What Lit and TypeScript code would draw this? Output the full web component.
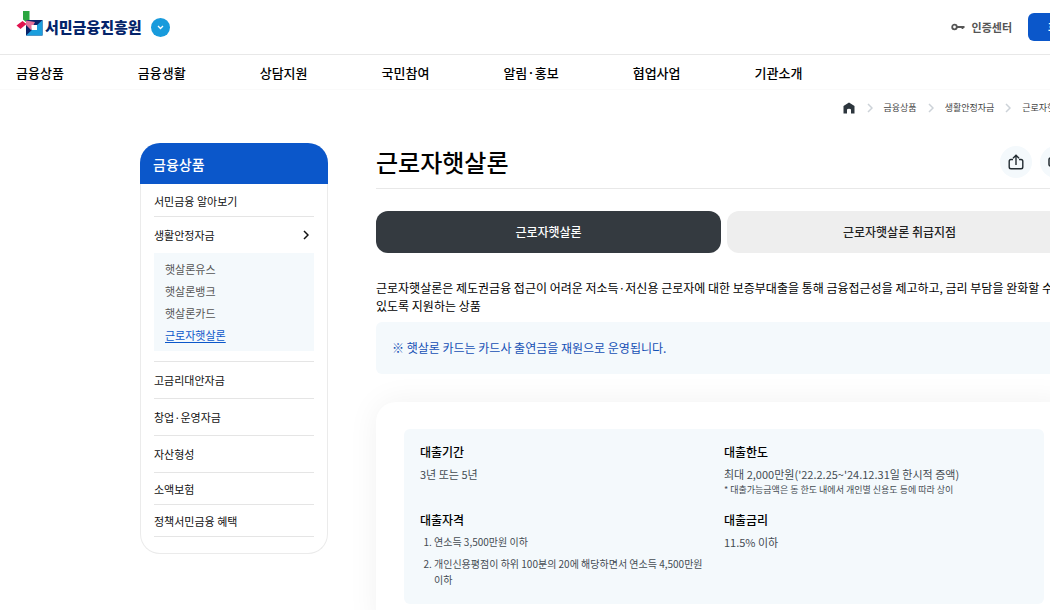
import { LitElement, html, svg, css, nothing } from "lit";
import { customElement, state } from "lit/decorators.js";
import { classMap } from "lit/directives/class-map.js";

const chevron = svg`<path d="M1 1l4 4-4 4" fill="none" stroke="currentColor" stroke-width="1.500"/>`;

@customElement("site-header")
class SiteHeader extends LitElement {
  static styles = css`
    :host { display: block; }
    .bar {
      display: flex; align-items: center; justify-content: space-between;
      height: 54px; padding: 0 16px; border-bottom: 1px solid #e8e8e8;
    }
    .brand, .tools, .auth { display: flex; align-items: center; }
    a { color: inherit; text-decoration: none; }
    .brand { gap: 9px; }
    .logo { display: flex; align-items: center; gap: 2px; color: #04246a; font-size: 15px; line-height: 22px; font-weight: 900; }
    .logo svg { display: block; margin-bottom: 8px; }
    button { font: inherit; border: 0; cursor: pointer; }
    .more { display: grid; place-items: center; width: 19px; height: 19px; padding: 0; border-radius: 50%; background: #189bdc; color: #fff; }
    .tools { gap: 16px; }
    .auth { gap: 7px; font-size: 11px; font-weight: 700; color: #555; }
    .dormant { min-width: 168px; height: 28px; padding: 0 20px; border-radius: 6px; background: #0b57ca; color: #fff; font-size: 11px; font-weight: 700; text-align: left; }
    .nav { display: flex; gap: 74px; align-items: center; height: 34px; padding: 0 16px; margin: 0; list-style: none; border-bottom: 1px solid #fafafa; font-size: 13px; font-weight: 500; }
  `;
  menu = ["금융상품", "금융생활", "상담지원", "국민참여", "알림·홍보", "협업사업", "기관소개"];
  render() {
    return html`
      <header>
        <div class="bar">
          <div class="brand">
            <a class="logo" href="#">
              <svg width="27" height="27" viewBox="0 0 27 27" aria-hidden="true">
                <path d="M7 1h6.500v9.500l-3 2-3.500-3z" fill="#2ba640"/>
                <path d="M.5 15.500 6.500 11l4 3-6 5z" fill="#e0134f"/>
                <path d="M10 10h16.500v15.500H10z" fill="#0a2369"/>
                <path d="M26.500 10v15.500H10z" fill="#1b9edd"/>
                <path d="M10 10.500 19 12l-4 8-5-5z" fill="#e2719a"/>
                <path d="M15.500 15h5.500v5h-5.500z" fill="#fff"/>
              </svg>
              <span>서민금융진흥원</span>
            </a>
            <button class="more" aria-label="관련 사이트">
              <svg width="7" height="5" viewBox="0 0 7 5"><path d="M1 1l2.500 2.500L6 1" fill="none" stroke="#fff" stroke-width="1.300"/></svg>
            </button>
          </div>
          <div class="tools">
            <a class="auth" href="#">
              <svg width="14" height="8" viewBox="0 0 14 8" aria-hidden="true"><g fill="none" stroke="#555" stroke-width="1.800"><circle cx="3.500" cy="4" r="2.300"/><path d="M6 4h7.500M11.500 4v2"/></g></svg>
              인증센터
            </a>
            <button class="dormant">휴면예금 찾아줌</button>
          </div>
        </div>
        <nav><ul class="nav">${this.menu.map((m) => html`<li><a href="#">${m}</a></li>`)}</ul></nav>
      </header>`;
  }
}

interface SideItem { label: string; size: string; sub?: string[]; }

@customElement("side-menu")
class SideMenu extends LitElement {
  static styles = css`
    :host { display: block; font-size: 11px; }
    nav { border: 1px solid #ebebeb; border-top: 0; border-radius: 20px; padding-bottom: 16px; }
    h2 { margin: 0 -1px; height: 41px; padding: 0 13px; display: flex; align-items: center; border-radius: 20px 20px 0 0; background: #0b57ca; color: #fff; font-size: 14px; font-weight: 500; }
    ul { list-style: none; margin: 0; padding: 0; }
    .items { margin: 0 13px; padding-top: 1px; }
    .item { border-bottom: 1px solid #e5e5e5; }
    a { color: #111; text-decoration: none; }
    .link { display: flex; align-items: center; justify-content: space-between; padding-right: 5px; }
    .short { height: 31px; }
    .tall { height: 36px; }
    .open { padding-bottom: 10px; }
    .sub { background: #f4f9fc; padding: 5px 11px; }
    .sub li { height: 22px; display: flex; align-items: center; }
    .sub a { color: #555; }
    .sub .current { color: #0b57ca; text-decoration: underline; text-underline-offset: 2px; }
  `;
  items: SideItem[] = [
    { label: "서민금융 알아보기", size: "short" },
    { label: "생활안정자금", size: "tall", sub: ["햇살론유스", "햇살론뱅크", "햇살론카드", "근로자햇살론"] },
    { label: "고금리대안자금", size: "tall" },
    { label: "창업·운영자금", size: "tall" },
    { label: "자산형성", size: "tall" },
    { label: "소액보험", size: "short" },
    { label: "정책서민금융 혜택", size: "short" },
  ];
  render() {
    return html`<nav>
      <h2>금융상품</h2>
      <ul class="items">
        ${this.items.map((i) => html`
          <li class=${classMap({ item: true, open: !!i.sub })}>
            <a class="link ${i.size}" href="#">${i.label}
              ${i.sub ? html`<svg width="6" height="10" viewBox="0 0 6 10" aria-hidden="true">${chevron}</svg>` : nothing}
            </a>
            ${i.sub ? html`<ul class="sub">${i.sub.map((s) => html`<li><a class=${classMap({ current: s === "근로자햇살론" })} href="#">${s}</a></li>`)}</ul>` : nothing}
          </li>`)}
      </ul>
    </nav>`;
  }
}

@customElement("loan-detail")
class LoanDetail extends LitElement {
  @state() tab = 0;
  static styles = css`
    :host { display: block; font-size: 12px; line-height: 18px; }
    .head { display: flex; justify-content: space-between; align-items: center; height: 37px; padding-bottom: 8px; border-bottom: 1px solid #e8e8e8; }
    h1 { margin: 0; font-size: 24px; line-height: 36px; font-weight: 500; }
    .actions { display: flex; gap: 8px; }
    button { font: inherit; border: 0; cursor: pointer; }
    .round { width: 32px; height: 32px; padding: 0; border-radius: 50%; display: grid; place-items: center; background: #f4f9fc; color: #222b31; }
    .tabs { display: grid; grid-template-columns: 1fr 1fr; gap: 6px; margin-top: 22px; }
    .tab { height: 42px; border-radius: 12px; background: #eee; color: #222; font-weight: 500; }
    .tab.on { background: #343a40; color: #fff; }
    p { margin: 0; }
    .desc { margin-top: 26px; }
    .notice { margin-top: 7px; padding: 17px 16px; border-radius: 6px; background: #f4f9fc; color: #1450b4; }
    .card { margin-top: 28px; padding: 27px 28px; border-radius: 20px; background: #fff; box-shadow: 0 0 32px rgba(0, 0, 0, 0.06); }
    dl { display: grid; grid-template-columns: 1fr 1fr; row-gap: 13px; margin: 0; padding: 14px 16px 16px; border-radius: 6px; background: #f4f9fc; }
    dt { font-weight: 500; }
    dd { margin: 5px 0 0; font-size: 11px; line-height: 16px; color: #444c53; }
    .small { font-size: 9px; }
    ol { display: grid; gap: 6px; margin: 0; padding: 0 8px 0 14px; font-size: 10px; }
  `;
  render() {
    return html`
      <div class="head">
        <h1>근로자햇살론</h1>
        <div class="actions">
          <button class="round" aria-label="공유">
            <svg width="16" height="16" viewBox="0 0 16 16"><path d="M5 5.500H3Q1.200 5.500 1.200 7.300V13Q1.200 14.800 3 14.800h10q1.800 0 1.800-1.800V7.300q0-1.800-1.800-1.800H11M8 11V1.500M5 4.300 8 1.300l3 3" fill="none" stroke="currentColor" stroke-width="1.400"/></svg>
          </button>
          <button class="round" aria-label="인쇄">
            <svg width="16" height="16" viewBox="0 0 16 16"><path d="M4 4V1.500h8V4M4 12H2.500Q1 12 1 10.500v-5Q1 4 2.500 4h11Q15 4 15 5.500v5q0 1.500-1.500 1.500H12M4 9.500h8v5H4z" fill="none" stroke="currentColor" stroke-width="1.500"/></svg>
          </button>
        </div>
      </div>
      <div class="tabs" role="tablist">
        ${["근로자햇살론", "근로자햇살론 취급지점"].map((t, i) => html`
          <button role="tab" aria-selected=${this.tab === i} class=${classMap({ tab: true, on: this.tab === i })} @click=${() => (this.tab = i)}>${t}</button>`)}
      </div>
      <p class="desc">근로자햇살론은 제도권금융 접근이 어려운 저소득·저신용 근로자에 대한 보증부대출을 통해 금융접근성을 제고하고, 금리 부담을 완화할 수 있도록 지원하는 상품</p>
      <p class="notice">※ 햇살론 카드는 카드사 출연금을 재원으로 운영됩니다.</p>
      <section class="card">
        <dl>
          <div><dt>대출기간</dt><dd>3년 또는 5년</dd></div>
          <div><dt>대출한도</dt><dd>최대 2,000만원('22.2.25~'24.12.31일 한시적 증액)<p class="small">* 대출가능금액은 동 한도 내에서 개인별 신용도 등에 따라 상이</p></dd></div>
          <div><dt>대출자격</dt><dd><ol><li>연소득 3,500만원 이하</li><li>개인신용평점이 하위 100분의 20에 해당하면서 연소득 4,500만원 이하</li></ol></dd></div>
          <div><dt>대출금리</dt><dd>11.5% 이하</dd></div>
        </dl>
      </section>`;
  }
}

@customElement("app-root")
class AppRoot extends LitElement {
  static styles = css`
    :host { display: block; overflow: hidden; background: #fff; color: #000; word-break: keep-all; font-family: "Noto Sans CJK KR", "Noto Sans", sans-serif; }
    .page { min-width: 1212px; }
    .crumbs { display: flex; justify-content: flex-end; align-items: center; gap: 11px; height: 35px; margin: 0 140px; font-size: 9px; color: #444; }
    .crumbs svg { display: block; color: #ccd2d8; }
    a { color: inherit; text-decoration: none; }
    .body { display: grid; grid-template-columns: 188px 1fr; gap: 48px; align-items: start; padding: 18px 140px 48px; }
  `;
  crumbs = ["금융상품", "생활안정자금", "근로자햇살론"];
  render() {
    return html`<div class="page">
      <site-header></site-header>
      <nav class="crumbs">
        <a href="#" aria-label="홈"><svg width="13" height="12" viewBox="0 0 13 12"><path d="M6 .5 11.500 4v7.500H8V7.800Q8 6.800 6 6.800T4 7.800v3.700H.5V4z" fill="#2d363d"/></svg></a>
        ${this.crumbs.map((c) => html`<svg width="6" height="10" viewBox="0 0 6 10" aria-hidden="true">${chevron}</svg><a href="#">${c}</a>`)}
      </nav>
      <div class="body">
        <side-menu></side-menu>
        <main><loan-detail></loan-detail></main>
      </div>
    </div>`;
  }
}
